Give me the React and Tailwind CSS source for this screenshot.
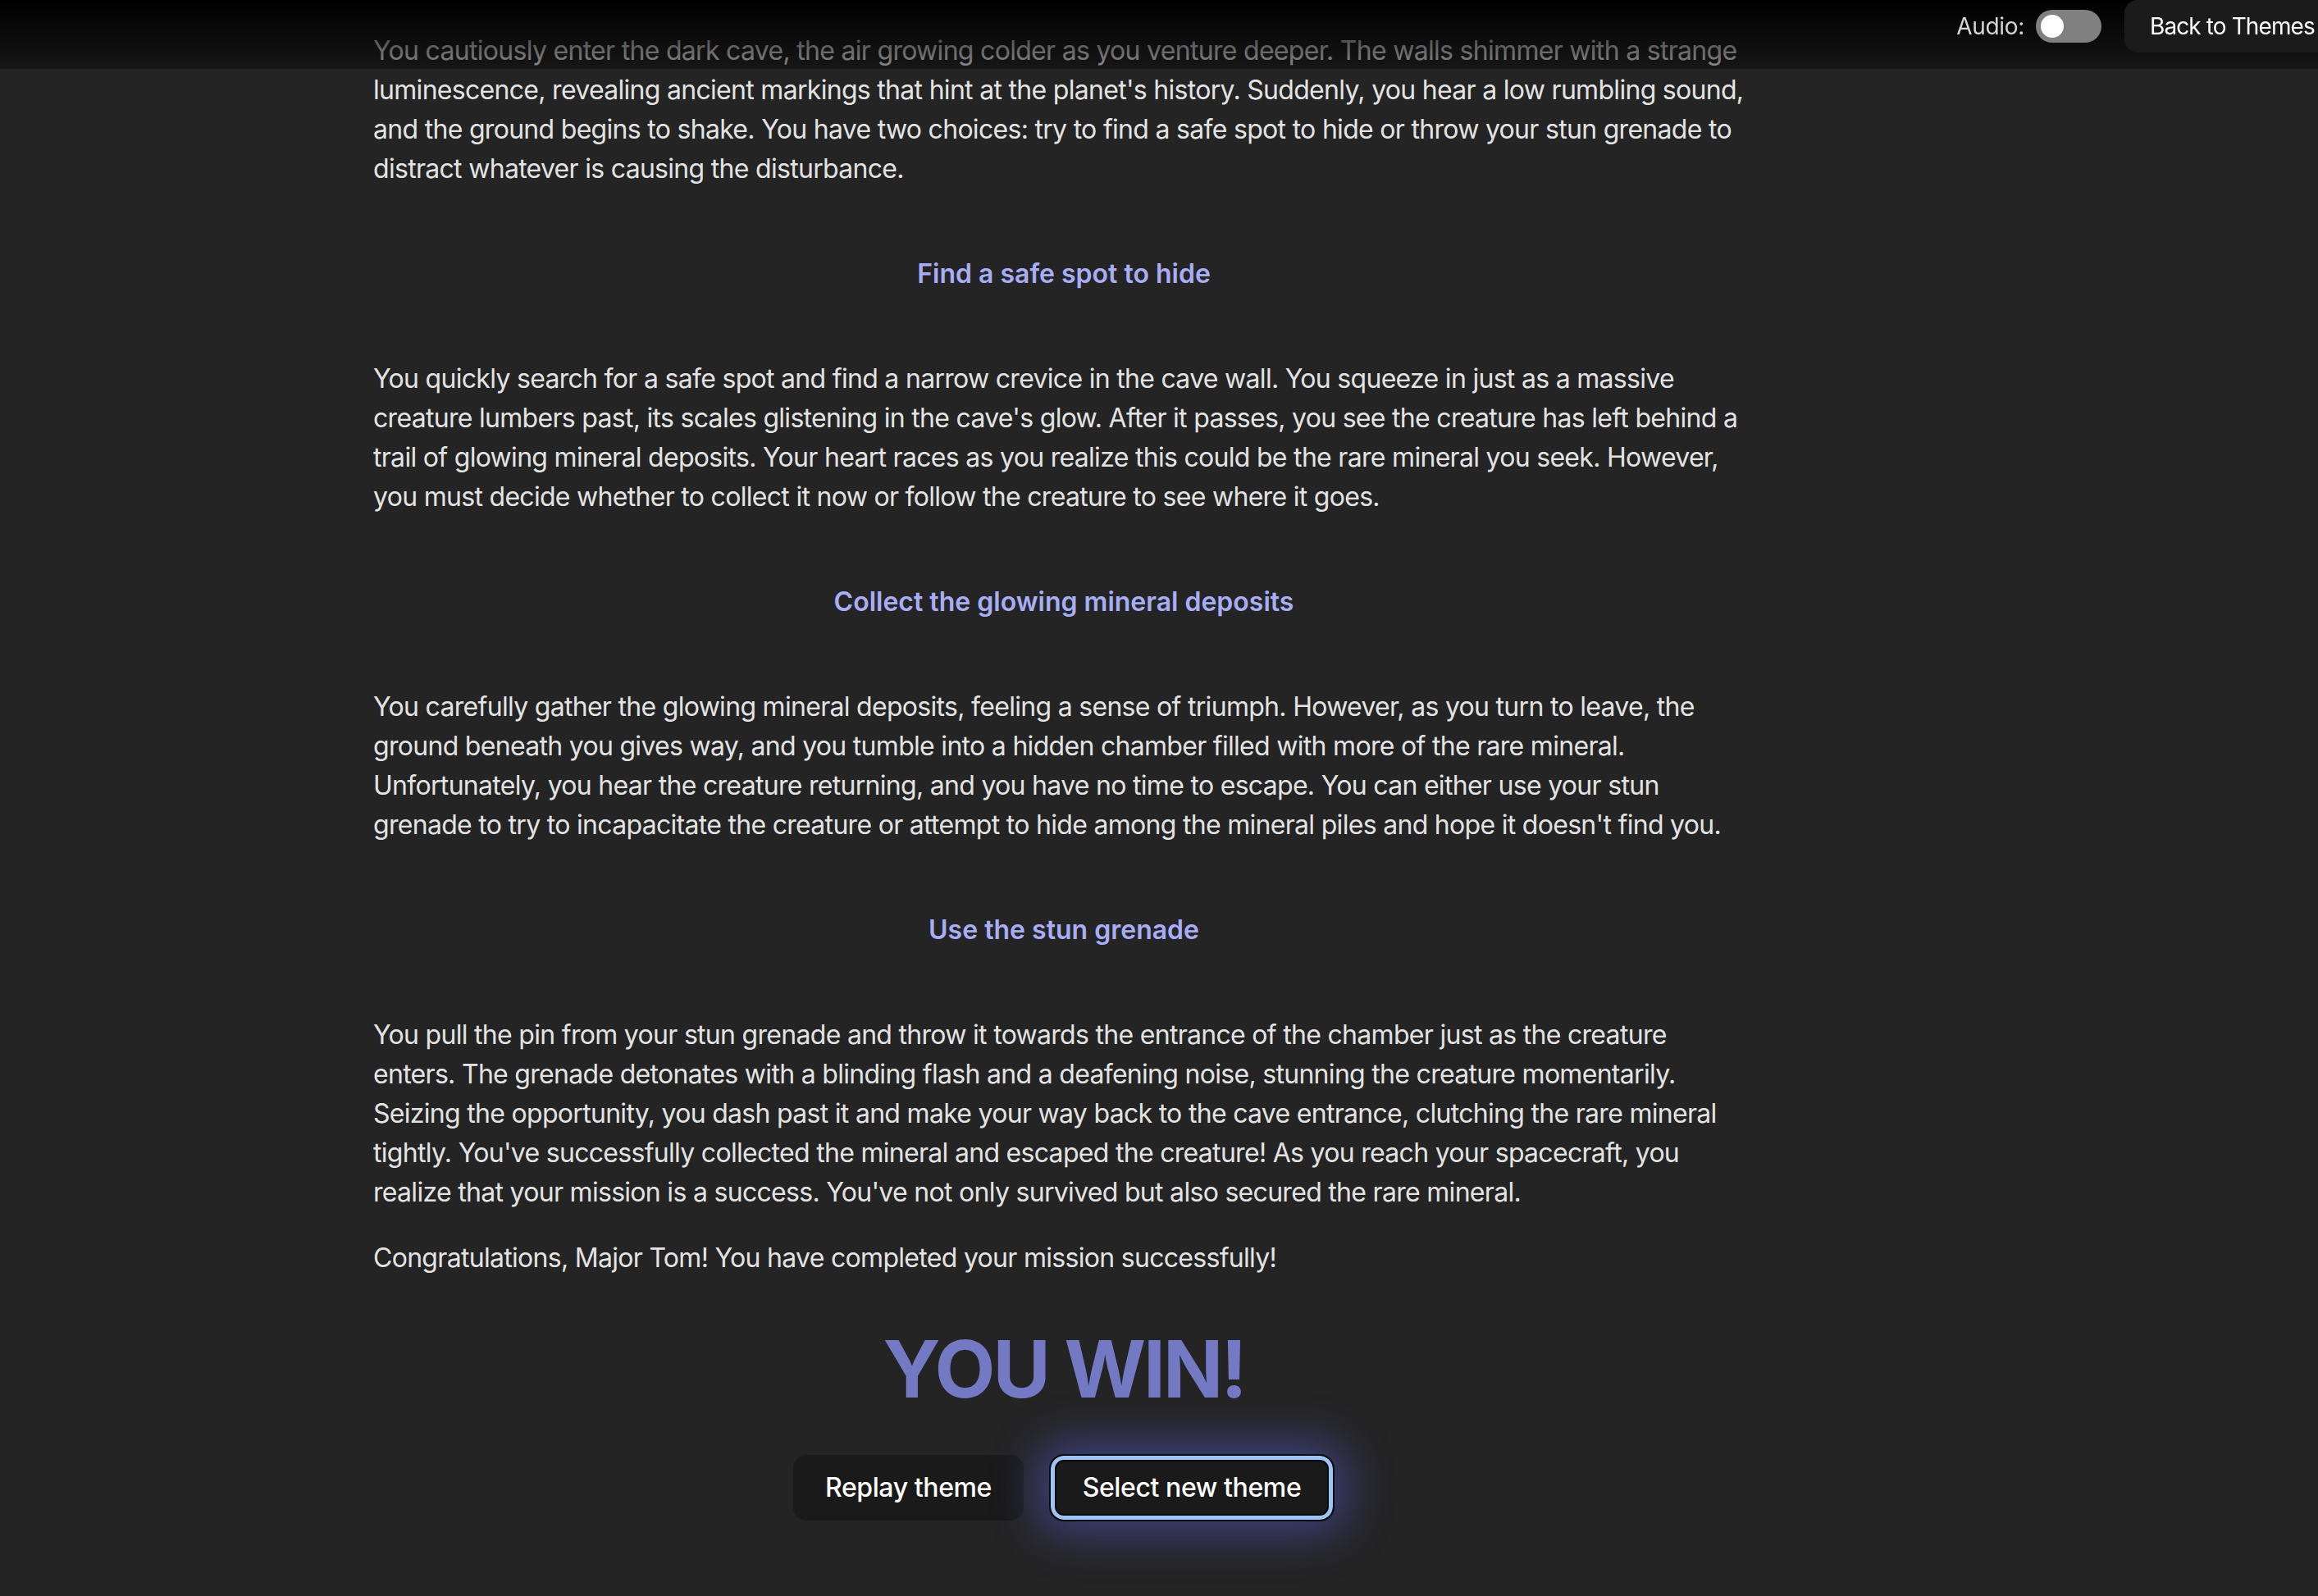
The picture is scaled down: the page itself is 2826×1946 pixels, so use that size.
import React from 'react';

const story = [
  {
    lines: [
      'You cautiously enter the dark cave, the air growing colder as you venture deeper. The walls shimmer with a strange',
      "luminescence, revealing ancient markings that hint at the planet's history. Suddenly, you hear a low rumbling sound,",
      'and the ground begins to shake. You have two choices: try to find a safe spot to hide or throw your stun grenade to',
      'distract whatever is causing the disturbance.',
    ],
    choice: 'Find a safe spot to hide',
  },
  {
    lines: [
      'You quickly search for a safe spot and find a narrow crevice in the cave wall. You squeeze in just as a massive',
      "creature lumbers past, its scales glistening in the cave's glow. After it passes, you see the creature has left behind a",
      'trail of glowing mineral deposits. Your heart races as you realize this could be the rare mineral you seek. However,',
      'you must decide whether to collect it now or follow the creature to see where it goes.',
    ],
    choice: 'Collect the glowing mineral deposits',
  },
  {
    lines: [
      'You carefully gather the glowing mineral deposits, feeling a sense of triumph. However, as you turn to leave, the',
      'ground beneath you gives way, and you tumble into a hidden chamber filled with more of the rare mineral.',
      'Unfortunately, you hear the creature returning, and you have no time to escape. You can either use your stun',
      "grenade to try to incapacitate the creature or attempt to hide among the mineral piles and hope it doesn't find you.",
    ],
    choice: 'Use the stun grenade',
  },
];

const ending = [
  'You pull the pin from your stun grenade and throw it towards the entrance of the chamber just as the creature',
  'enters. The grenade detonates with a blinding flash and a deafening noise, stunning the creature momentarily.',
  'Seizing the opportunity, you dash past it and make your way back to the cave entrance, clutching the rare mineral',
  "tightly. You've successfully collected the mineral and escaped the creature! As you reach your spacecraft, you",
  "realize that your mission is a success. You've not only survived but also secured the rare mineral.",
];

const Para = ({ lines }) => (
  <p className="text-[32px] leading-[48px] tracking-[-0.7px]">
    {lines.map((l, i) => (
      <span key={i} className="block whitespace-nowrap">{l}</span>
    ))}
  </p>
);

const App = () => {
  return (
    <div
      className="min-h-screen bg-[#242424] text-[#e3e3e3] overflow-hidden"
      style={{ fontFamily: 'Inter, "Noto Sans", sans-serif' }}
    >
      <header className="fixed top-0 left-0 right-0 h-[84px] bg-gradient-to-b from-[#000000] to-[rgba(0,0,0,0.38)] overflow-hidden z-10">
        <div className="h-[64px] flex items-center justify-end">
          <span className="text-[28px] tracking-[-0.3px] text-[#d6d6d6] mr-[14px]">Audio:</span>
          <div className="w-[80px] h-[40px] rounded-full bg-[#808080] flex items-center px-[6px] mr-[28px]">
            <div className="w-[28px] h-[28px] rounded-full bg-white" />
          </div>
          <button className="h-[64px] w-[274px] shrink-0 rounded-[16px] bg-[#1b1b1b] pl-[31px] text-left -mr-[38px] text-[28px] font-normal tracking-[-0.9px] text-white whitespace-nowrap">
            Back to Themes
          </button>
        </div>
      </header>

      <main className="ml-[455px] w-[1684px] pt-[38px] pb-[90px] flex flex-col">
        {story.map((s, i) => (
          <div key={i} className="flex flex-col">
            <Para lines={s.lines} />
            <p className="my-[80px] text-center text-[32px] leading-[48px] font-semibold text-[#a8aef5]">
              {s.choice}
            </p>
          </div>
        ))}
        <Para lines={ending} />
        <p className="mt-[32px] text-[32px] leading-[48px] tracking-[-0.7px]">
          Congratulations, Major Tom! You have completed your mission successfully!
        </p>
        <h1 className="mt-[58px] text-center text-[96px] leading-[106px] font-bold tracking-[-3px] text-[#7479c4]">
          YOU WIN!
        </h1>
        <div className="mt-[52px] flex justify-center gap-[31px]">
          <button className="h-[80px] w-[281px] rounded-[16px] bg-[#1a1a1a] text-[32px] font-medium tracking-[-0.4px] text-white">
            Replay theme
          </button>
          <button className="h-[82px] w-[348px] -mt-[1px] rounded-[18px] bg-[#1a1a1a] border-[2px] border-[#0b0b0b] text-[32px] font-medium tracking-[-0.4px] text-white shadow-[inset_0_0_0_5px_#9dc4f7,inset_0_0_0_7px_#0b0b0b,0_0_56px_14px_rgba(100,108,255,0.42)]">
            Select new theme
          </button>
        </div>
      </main>
    </div>
  );
};

export default App;
